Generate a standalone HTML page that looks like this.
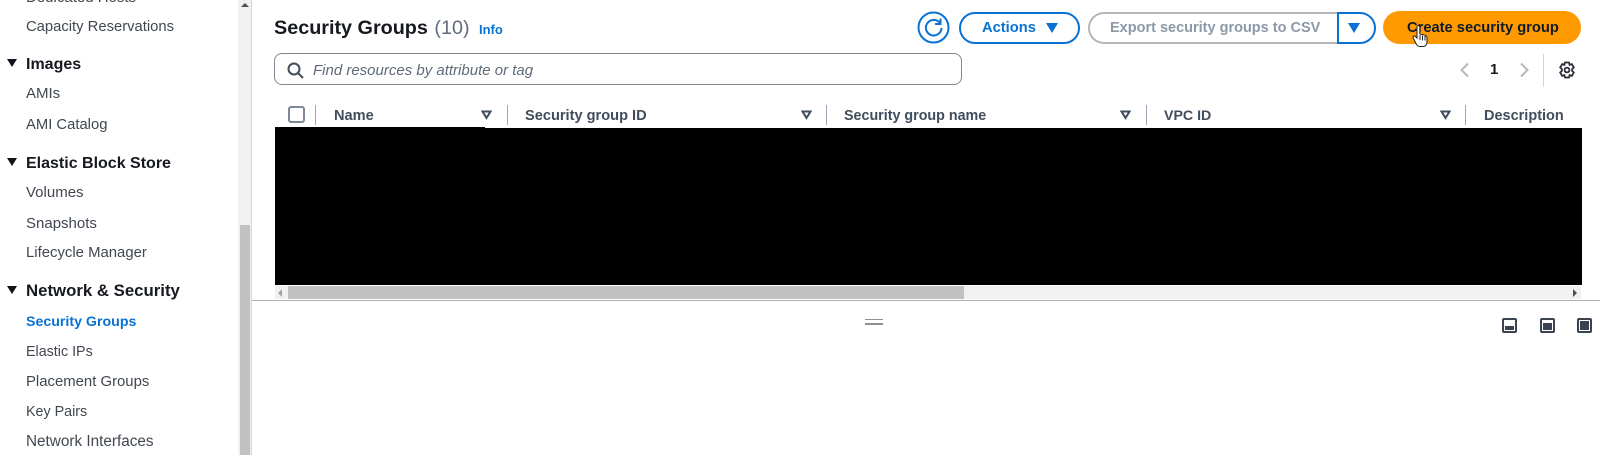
<!DOCTYPE html>
<html lang="en"><head><meta charset="utf-8"><title>Security Groups</title>
<style>
html,body{margin:0;padding:0;width:1600px;height:455px;overflow:hidden;background:#fff}
body{font-family:"Liberation Sans",sans-serif;position:relative}
#w{position:absolute;left:0;top:0;width:1600px;height:455px;filter:blur(.3px)}
.t{position:absolute;white-space:nowrap;line-height:20px;height:20px}
.n{left:26px;font-size:15px;color:#414750}
.h{left:26px;font-size:16px;font-weight:700;color:#16191f}
.c{font-size:14.600px;font-weight:700;color:#414d5c;top:106px}
.a{position:absolute}
.tri{position:absolute;left:7px;width:0;height:0;border-left:5.500px solid transparent;border-right:5.500px solid transparent;border-top:8px solid #0f141a}
.d{position:absolute;top:105px;width:1px;height:20px;background:#9ba7b6}
</style></head><body><div id="w">
<div class="t n" style="top:-12px">Dedicated Hosts</div>
<div class="t n" style="top:17px;font-size:14.800px">Capacity Reservations</div>
<div class="tri" style="top:59px"></div><div class="t h" style="top:55px">Images</div>
<div class="t n" style="top:84px">AMIs</div>
<div class="t n" style="top:115px;font-size:14.800px">AMI Catalog</div>
<div class="tri" style="top:158px"></div><div class="t h" style="top:154px">Elastic Block Store</div>
<div class="t n" style="top:183px">Volumes</div>
<div class="t n" style="top:214px">Snapshots</div>
<div class="t n" style="top:243px;font-size:14.900px">Lifecycle Manager</div>
<div class="tri" style="top:286px"></div><div class="t h" style="top:281px;font-size:16.800px">Network &amp; Security</div>
<div class="t n" style="top:312px;color:#0972d3;font-weight:700;font-size:14.200px">Security Groups</div>
<div class="t n" style="top:342px;font-size:14.300px">Elastic IPs</div>
<div class="t n" style="top:372px;font-size:14.900px">Placement Groups</div>
<div class="t n" style="top:402px;font-size:14.300px">Key Pairs</div>
<div class="t n" style="top:432px;font-size:15.300px">Network Interfaces</div>

<div class="a" style="left:238px;top:0;width:13px;height:455px;background:#f1f1f1"></div>
<div class="a" style="left:240px;top:225px;width:10px;height:230px;background:#c1c1c1"></div>
<div class="a" style="left:241px;top:3px;width:0;height:0;border-left:4px solid transparent;border-right:4px solid transparent;border-bottom:4px solid #505050"></div>
<div class="a" style="left:251px;top:0;width:1px;height:455px;background:#d5d5d5"></div>

<div class="t" style="left:274px;top:16px;height:24px;line-height:24px;font-size:19.800px;font-weight:700;color:#16191f">Security Groups <span style="font-weight:400;color:#5f6b7a;margin-left:1px">(10)</span></div>
<div class="t" style="left:479px;top:20px;font-size:13px;font-weight:700;color:#0972d3">Info</div>

<svg class="a" style="left:917px;top:11px" width="33" height="33" viewBox="0 0 33 33" fill="none" stroke="#0972d3" stroke-width="2"><circle cx="16.500" cy="16.500" r="15"/><path d="M22.500 11.500A7.800 7.800 0 1 0 24.500 17"/><path d="M23.500 7.500v5.500h-5.500"/></svg>
<div class="a" style="left:959px;top:12px;width:117px;height:28px;border:2px solid #0972d3;border-radius:16px"></div>
<div class="t" style="left:982px;top:18px;font-size:14.700px;font-weight:700;color:#0972d3">Actions</div>
<div class="a" style="left:1046px;top:23px;width:0;height:0;border-left:6px solid transparent;border-right:6px solid transparent;border-top:10px solid #0972d3"></div>

<div class="a" style="left:1088px;top:12px;width:249px;height:28px;border:2px solid #b4b8bd;border-right:none;border-radius:16px 0 0 16px"></div>
<div class="t" style="left:1110px;top:18px;font-size:14.500px;font-weight:700;color:#8d99a8">Export security groups to CSV</div>
<div class="a" style="left:1337px;top:12px;width:35px;height:28px;border:2px solid #0972d3;border-radius:0 16px 16px 0"></div>
<div class="a" style="left:1348px;top:23px;width:0;height:0;border-left:6px solid transparent;border-right:6px solid transparent;border-top:10px solid #0972d3"></div>

<div class="a" style="left:1383px;top:11px;width:198px;height:33px;background:#ff9900;border-radius:17px"></div>
<div class="t" style="left:1407px;top:18px;font-size:14.700px;font-weight:700;color:#0f1b2a">Create security group</div>
<svg class="a" style="left:1412px;top:25px" width="17" height="23" viewBox="0 0 17 23"><path d="M5 2a1.400 1.400 0 0 1 2.800 0v7l5 1.200c1.500.4 2.200 1.200 2.200 2.800v4c0 2.500-1.500 4.500-4 4.500H8c-1.800 0-2.800-1-3.800-2.500L1.200 13c-.8-1.500 1-2.800 2.200-1.500L5 13z" fill="#fff" stroke="#222" stroke-width="1"/><path d="M8 10v5M10.500 10.500v5M13 11v4.500" stroke="#222" stroke-width="1" fill="none"/></svg>

<div class="a" style="left:274px;top:53px;width:686px;height:30px;border:1.500px solid #7f8792;border-radius:8px"></div>
<svg class="a" style="left:287px;top:62px" width="17" height="17" viewBox="0 0 17 17" fill="none" stroke="#414d5c" stroke-width="2"><circle cx="7" cy="7" r="5.500"/><path d="M11 11l5 5"/></svg>
<div class="t" style="left:313px;top:61px;font-size:15px;font-style:italic;color:#5f6b7a">Find resources by attribute or tag</div>

<svg class="a" style="left:1458px;top:62px" width="14" height="16" viewBox="0 0 14 16" fill="none" stroke="#b4b8bd" stroke-width="2"><path d="M10 1.500L3.500 8l6.500 6.500"/></svg>
<div class="t" style="left:1490px;top:60px;font-size:15px;font-weight:700;color:#16191f">1</div>
<svg class="a" style="left:1517px;top:62px" width="14" height="16" viewBox="0 0 14 16" fill="none" stroke="#b4b8bd" stroke-width="2"><path d="M4 1.500L10.500 8 4 14.500"/></svg>
<div class="a" style="left:1543px;top:54px;width:1px;height:33px;background:#d1d5db"></div>
<svg class="a" style="left:1558px;top:61px" width="18" height="18" viewBox="0 0 18 18" fill="none" stroke="#2a2f38" stroke-width="1.800"><path d="M7 1.500h4l.6 2.300 2.200-.7 2 3.400-1.700 1.600v1.800l1.700 1.600-2 3.400-2.200-.7-.6 2.300H7l-.6-2.300-2.200.7-2-3.400 1.700-1.600V8.100L2.200 6.500l2-3.400 2.200.7z"/><circle cx="9" cy="9" r="2.400"/></svg>

<div class="a" style="left:288px;top:106px;width:13px;height:13px;border:2px solid #7d8998;border-radius:3px"></div>
<div class="d" style="left:315px"></div>
<div class="t c" style="left:334px">Name</div>
<div class="d" style="left:507px"></div>
<div class="t c" style="left:525px">Security group ID</div>
<div class="d" style="left:826px"></div>
<div class="t c" style="left:844px;font-size:14.300px">Security group name</div>
<div class="d" style="left:1146px"></div>
<div class="t c" style="left:1164px;font-size:14.200px">VPC ID</div>
<div class="d" style="left:1465px"></div>
<div class="t c" style="left:1484px;font-size:14.500px">Description</div>
<svg class="a" style="left:481px;top:110px" width="11" height="10" viewBox="0 0 11 10" fill="none" stroke="#414d5c" stroke-width="2"><path d="M1.500 1.500h8L5.500 8z"/></svg>
<svg class="a" style="left:801px;top:110px" width="11" height="10" viewBox="0 0 11 10" fill="none" stroke="#414d5c" stroke-width="2"><path d="M1.500 1.500h8L5.500 8z"/></svg>
<svg class="a" style="left:1120px;top:110px" width="11" height="10" viewBox="0 0 11 10" fill="none" stroke="#414d5c" stroke-width="2"><path d="M1.500 1.500h8L5.500 8z"/></svg>
<svg class="a" style="left:1440px;top:110px" width="11" height="10" viewBox="0 0 11 10" fill="none" stroke="#414d5c" stroke-width="2"><path d="M1.500 1.500h8L5.500 8z"/></svg>

<div class="a" style="left:275px;top:127px;width:210px;height:3px;background:#000"></div>
<div class="a" style="left:275px;top:128px;width:1307px;height:157px;background:#000"></div>

<div class="a" style="left:275px;top:286px;width:1306px;height:13px;background:#f1f1f1"></div>
<div class="a" style="left:288px;top:286px;width:676px;height:13px;background:#c1c1c1"></div>
<div class="a" style="left:278px;top:289px;width:0;height:0;border-top:4px solid transparent;border-bottom:4px solid transparent;border-right:4px solid #a3a3a3"></div>
<div class="a" style="left:1573px;top:289px;width:0;height:0;border-top:4px solid transparent;border-bottom:4px solid transparent;border-left:4px solid #505050"></div>
<div class="a" style="left:252px;top:300px;width:1348px;height:1px;background:#aab0b8"></div>

<div class="a" style="left:865px;top:319px;width:18px;height:1px;background:#8a8f96"></div>
<div class="a" style="left:865px;top:323px;width:18px;height:2px;background:#8a8f96"></div>

<div class="a" style="left:1502px;top:318px;width:11px;height:11px;border:2px solid #3b4250;border-radius:2px"><div class="a" style="left:1px;top:6px;width:9px;height:4px;background:#3b4250"></div></div>
<div class="a" style="left:1540px;top:318px;width:11px;height:11px;border:2px solid #3b4250;border-radius:2px"><div class="a" style="left:1px;top:3px;width:9px;height:7px;background:#3b4250"></div></div>
<div class="a" style="left:1577px;top:318px;width:11px;height:11px;border:2px solid #3b4250;border-radius:2px"><div class="a" style="left:1px;top:1px;width:9px;height:9px;background:#3b4250"></div></div>
</div></body></html>
